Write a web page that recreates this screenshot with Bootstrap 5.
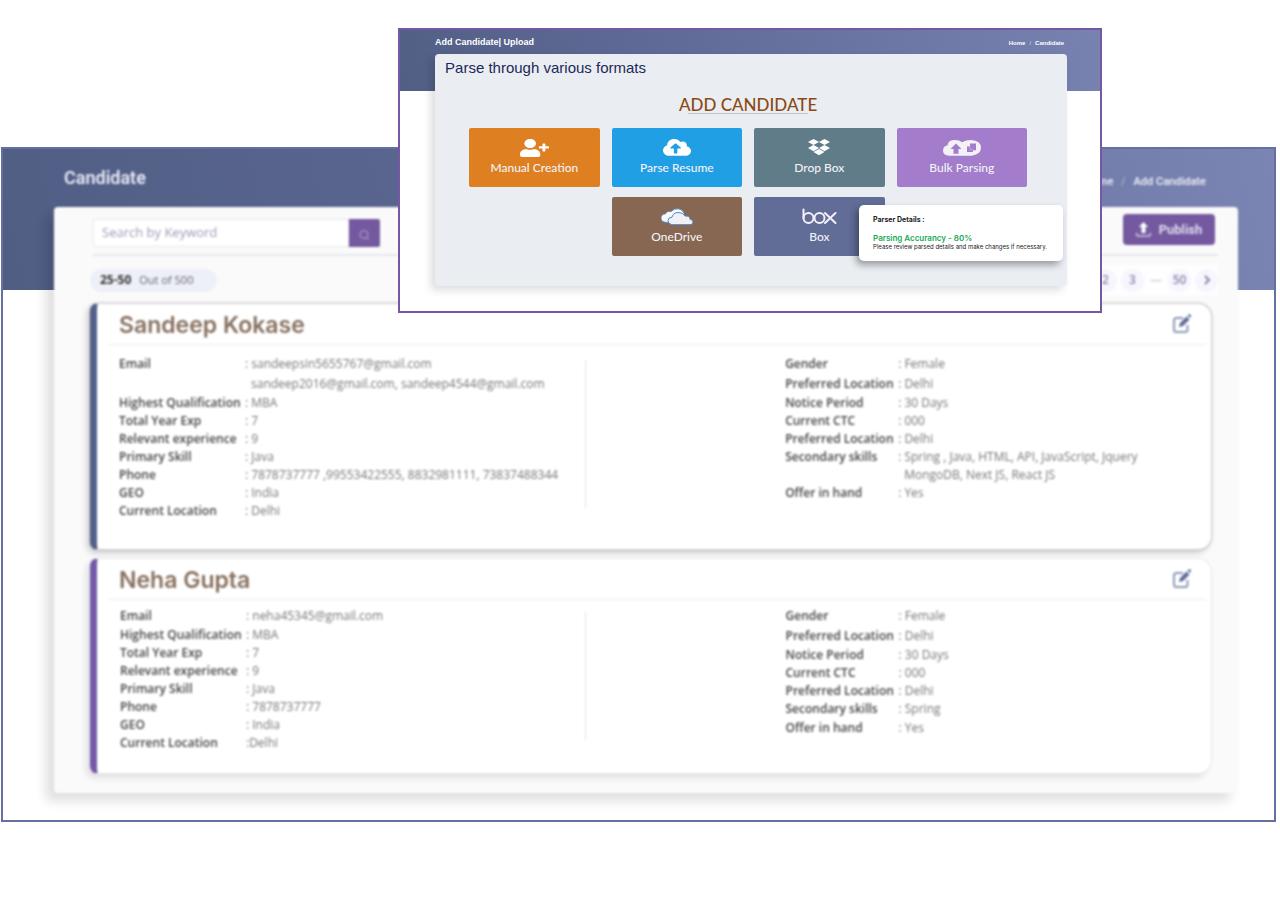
<!DOCTYPE html>
<html lang="en">
<head>
<meta charset="utf-8">
<meta name="viewport" content="width=device-width, initial-scale=1">
<title>Candidate</title>
<link href="https://cdn.jsdelivr.net/npm/bootstrap@5.3.0/dist/css/bootstrap.min.css" rel="stylesheet">
<style>
  body { font-family: "Open Sans", "Noto Sans", sans-serif; background: #fff; }
  .stage { padding: 147px 4px 77px 1px; }
  a { text-decoration: none; }

  /* candidate list, out of focus behind the dialog */
  .list-window {
    border: 2px solid #6470a0;
    background: #fff linear-gradient(75deg, #505e84 0%, #5b6691 38%, #6b76a5 70%, #7b85b3 100%) 0 0 / 100% 141px no-repeat;
  }
  .soft { filter: blur(1px); }
  .list-head { height: 58px; padding: 0 68px 0 61px; color: #fff; font-family: Roboto, sans-serif; }
  .list-head h1 { font-size: 18px; font-weight: 600; color: #e9ebf5; }
  .crumbs { font-size: 11px; font-weight: 600; padding-top: 8px; }
  .crumbs a { color: #e9ebf5; }
  .crumbs span { color: #a9b0d0; }
  .list-panel {
    margin: 0 36px 27px 51px; padding: 7px 26px 19px 36px;
    background: #fafafa; border-radius: 4px;
    box-shadow: -8px 8px 12px rgba(0,0,0,.13);
  }
  .toolbar { margin: 0 -6px 0 3px; padding: 0 3px 7px 0; border-bottom: 2px solid #e6e7ec; }
  .search { width: 287px; height: 28px; margin-top: 5px; }
  .search .form-control {
    font-family: "Open Sans", sans-serif; font-size: 13px; padding: 0 8px; border: 1px solid #e8e8ec; border-radius: 2px 0 0 2px; color: #444;
  }
  .search .form-control::placeholder { color: #9a9db5; }
  .search button { width: 32px; padding: 0; background: #7459a0; border: 0; border-radius: 0 2px 2px 0; }
  .btn-publish {
    width: 92px; height: 31px; padding: 0; background: #7459a0; color: #e9e4f2; border: 0; border-radius: 4px;
    font-family: Roboto, sans-serif; font-size: 13px; font-weight: 600;
  }
  .pager-row { height: 30px; margin: 9px -6px 8px 0; }
  .count { width: 127px; height: 23px; padding-left: 10px; border-radius: 12px; background: #eef0f9; font-size: 11px; color: #666; }
  .count strong { font-size: 12px; color: #333; }
  .pages { height: 30px; background: #fefefe; gap: 4px; color: #8f86a8; font-size: 12px; font-weight: 600; }
  .pages a, .pages span { width: 23px; height: 23px; color: inherit; display: flex; align-items: center; justify-content: center; }
  .pages a { border-radius: 50%; background: #f7f5fe; }
  .pages span { width: 16px; color: #c6cad0; }

  .person {
    background: #fff; border: 1px solid #d5d5d5; border-left: 7px solid #52608a; border-radius: 14px;
    border-top-left-radius: 8px; border-bottom-left-radius: 8px;
    box-shadow: -3px 3px 6px rgba(0,0,0,.18), 0 0 2px rgba(0,0,0,.25);
  }
  .person + .person { margin-top: 8px; border-color: #e8e8e8; border-left-color: #7459a8; box-shadow: -4px 4px 6px rgba(0,0,0,.1); }
  .person-head { height: 41px; margin: 0 5px 0 12px; padding: 0 14px 0 10px; border-bottom: 1px solid #ececec; }
  .person-head h2 { font-family: Inter, sans-serif; font-size: 23px; font-weight: 600; color: #87705f; padding-top: 3px; }
  .person-head button { width: 20px; height: 20px; padding: 0; border: 0; background: none; color: #616c98; }
  .person-body { padding: 9px 0 29px 22px; }
  .person + .person .person-body { padding: 6px 0 21px 23px; }
  .facts { margin: 0; font-size: 12px; line-height: 18px; color: #777; }
  .facts dt { width: 126px; color: #444; font-weight: 600; white-space: nowrap; }
  .facts dd { margin: 0; white-space: nowrap; }
  .facts .roomy, .facts .roomy dd { line-height: 20px; }
  .facts .more { padding-left: 6px; }
  .facts-left { width: calc(43% - 4px); }
  .facts-right { width: 39%; }
  .facts-right dt { width: 113px; }
  .rule { width: 1px; margin: 6px 0 12px; background: #e4e4e4; }

  /* upload dialog on top of the list */
  .upload {
    position: absolute; top: 28px; left: 31.1%; width: 55%; color: #fff;
    border: 2px solid #7657a3;
    background: #fff linear-gradient(80deg, #525f85 0%, #606b98 40%, #7782b0 100%) 0 0 / 100% 61px no-repeat;
  }
  .upload-head { height: 24px; padding: 0 36px 0 35px; font-family: "Liberation Sans", sans-serif; }
  .upload-head h2 { font-size: 9px; font-weight: 700; }
  .upload-head nav { font-size: 6px; font-weight: 700; padding-top: 2px; }
  .upload-head nav a { color: #fff; }
  .upload-panel { margin: 0 33px 25px 35px; padding: 4px 40px 30px 34px; background: #eaeef3; border-radius: 4px; box-shadow: -4px 4px 8px rgba(0,0,0,.14); }
  .upload-panel h3 { margin: 0 0 15px -24px; font-family: "Liberation Sans", sans-serif; font-size: 15px; line-height: 20px; color: #1d2858; }
  .upload-panel h4 { font-family: Lato, sans-serif; font-size: 17px; line-height: 24px; color: #8a4a16; font-weight: 500; }
  .underline { width: 120px; height: 1px; background: #c3c6d0; margin: -4px auto 14px; }
  .tiles { --bs-gutter-x: 12px; --bs-gutter-y: 10px; }
  .tile {
    display: block; width: 100%; height: 59px; padding: 0 0 2px; border: 0; border-radius: 2px; color: #f2f2f6;
    font-family: Lato, sans-serif; font-size: 12px; font-weight: 500; line-height: 16px;
  }
  .tile svg { display: block; margin: 2px auto 3px; height: 18px; }
  .t-manual { background: #de7f21; } .t-resume { background: #209fe5; } .t-drop { background: #607c89; }
  .t-bulk { background: #a37ccb; } .t-one { background: #876751; } .t-box { background: #616c97; }
  .parser-note {
    position: absolute; right: 37px; bottom: 50px; width: 204px; height: 56px; padding: 10px 14px;
    background: #fff; border-radius: 5px; box-shadow: -3px 4px 7px rgba(0,0,0,.35);
    font-family: Inter, sans-serif; color: #222;
  }
  .parser-note p { margin: 0; font-size: 6px; line-height: 7px; white-space: nowrap; }
  .parser-note .note-title { font-size: 7px; line-height: 10px; font-weight: 700; margin-bottom: 8px; }
  .parser-note .note-score { font-size: 8px; line-height: 10px; font-weight: 600; color: #17ab55; }
</style>
</head>
<body>
<svg class="d-none">
  <symbol id="edit" viewBox="0 0 20 20">
    <path d="M11 4H4.500Q2 4 2 6.500V15.500Q2 18 4.500 18H13Q15.500 18 15.500 15.500V11" fill="none" stroke="currentColor" stroke-width="2" opacity=".7"/>
    <path d="M7 13l1-4 6.500-6.500 3 3L11 12zM15.500 1.500l1-1q1-.7 2 .2t.3 2l-1.100 1z" fill="currentColor"/>
  </symbol>
</svg>
<div class="stage position-relative">
  <main class="list-window">
    <div class="soft">
      <header class="list-head d-flex justify-content-between align-items-center">
        <h1 class="m-0">Candidate</h1>
        <nav class="crumbs d-flex gap-2" aria-label="Breadcrumb"><a href="#">Home</a><span>/</span><a href="#">Add Candidate</a></nav>
      </header>
      <section class="list-panel">
        <div class="toolbar d-flex justify-content-between align-items-start">
          <form class="search input-group flex-nowrap">
            <input class="form-control" type="text" placeholder="Search by Keyword" aria-label="Search by Keyword">
            <button type="button" aria-label="Search"><svg width="12" height="12" viewBox="0 0 12 12" fill="none" stroke="#b7a6d0"><circle cx="6" cy="5.500" r="4"/><path d="M8 8l3 3"/></svg></button>
          </form>
          <button type="button" class="btn-publish d-flex align-items-center justify-content-center gap-2">
            <svg width="15" height="15" viewBox="0 0 15 15" fill="#fff"><path d="M7.500 0L12 5H9.500V11H5.500V5H3z"/><path d="M.5 10.500V12Q.5 14 2.500 14H12.500Q14.500 14 14.500 12V10.500" fill="none" stroke="#cfc3e0" stroke-width="1.500"/></svg>Publish
          </button>
        </div>
        <div class="pager-row d-flex justify-content-between align-items-center">
          <div class="count d-flex align-items-center gap-2"><strong>25-50</strong> Out of 500</div>
          <nav class="pages d-flex align-items-center" aria-label="Pages">
            <a href="#">1</a><a href="#">2</a><a href="#">3</a><span>—</span><a href="#">50</a>
            <a href="#" aria-label="Next"><svg width="8" height="10" viewBox="0 0 8 10" fill="none" stroke="currentColor" stroke-width="2"><path d="M2 1l4 4-4 4"/></svg></a>
          </nav>
        </div>

        <article class="person">
          <div class="person-head d-flex justify-content-between align-items-center">
            <h2 class="m-0">Sandeep Kokase</h2>
            <button type="button" aria-label="Edit Sandeep Kokase"><svg class="d-block" width="20" height="20"><use href="#edit"/></svg></button>
          </div>
          <div class="person-body d-flex">
            <dl class="facts facts-left">
              <div class="d-flex roomy"><dt>Email</dt><dd>: sandeepsin5655767@gmail.com<div class="more">sandeep2016@gmail.com, sandeep4544@gmail.com</div></dd></div>
              <div class="d-flex"><dt>Highest Qualification</dt><dd>: MBA</dd></div>
              <div class="d-flex"><dt>Total Year Exp</dt><dd>: 7</dd></div>
              <div class="d-flex"><dt>Relevant experience</dt><dd>: 9</dd></div>
              <div class="d-flex"><dt>Primary Skill</dt><dd>: Java</dd></div>
              <div class="d-flex"><dt>Phone</dt><dd>: 7878737777 ,99553422555, 8832981111, 73837488344</dd></div>
              <div class="d-flex"><dt>GEO</dt><dd>: India</dd></div>
              <div class="d-flex"><dt>Current Location</dt><dd>: Delhi</dd></div>
            </dl>
            <div class="rule"></div>
            <dl class="facts facts-right ms-auto">
              <div class="d-flex roomy"><dt>Gender</dt><dd>: Female</dd></div>
              <div class="d-flex roomy"><dt>Preferred Location</dt><dd>: Delhi</dd></div>
              <div class="d-flex"><dt>Notice Period</dt><dd>: 30 Days</dd></div>
              <div class="d-flex"><dt>Current CTC</dt><dd>: 000</dd></div>
              <div class="d-flex"><dt>Preferred Location</dt><dd>: Delhi</dd></div>
              <div class="d-flex"><dt>Secondary skills</dt><dd>: Spring , Java, HTML, API, JavaScript, Jquery<div class="more">MongoDB, Next JS, React JS</div></dd></div>
              <div class="d-flex"><dt>Offer in hand</dt><dd>: Yes</dd></div>
            </dl>
          </div>
        </article>

        <article class="person">
          <div class="person-head d-flex justify-content-between align-items-center">
            <h2 class="m-0">Neha Gupta</h2>
            <button type="button" aria-label="Edit Neha Gupta"><svg class="d-block" width="20" height="20"><use href="#edit"/></svg></button>
          </div>
          <div class="person-body d-flex">
            <dl class="facts facts-left">
              <div class="d-flex roomy"><dt>Email</dt><dd>: neha45345@gmail.com</dd></div>
              <div class="d-flex"><dt>Highest Qualification</dt><dd>: MBA</dd></div>
              <div class="d-flex"><dt>Total Year Exp</dt><dd>: 7</dd></div>
              <div class="d-flex"><dt>Relevant experience</dt><dd>: 9</dd></div>
              <div class="d-flex"><dt>Primary Skill</dt><dd>: Java</dd></div>
              <div class="d-flex"><dt>Phone</dt><dd>: 7878737777</dd></div>
              <div class="d-flex"><dt>GEO</dt><dd>: India</dd></div>
              <div class="d-flex"><dt>Current Location</dt><dd>:Delhi</dd></div>
            </dl>
            <div class="rule"></div>
            <dl class="facts facts-right ms-auto">
              <div class="d-flex roomy"><dt>Gender</dt><dd>: Female</dd></div>
              <div class="d-flex roomy"><dt>Preferred Location</dt><dd>: Delhi</dd></div>
              <div class="d-flex"><dt>Notice Period</dt><dd>: 30 Days</dd></div>
              <div class="d-flex"><dt>Current CTC</dt><dd>: 000</dd></div>
              <div class="d-flex"><dt>Preferred Location</dt><dd>: Delhi</dd></div>
              <div class="d-flex"><dt>Secondary skills</dt><dd>: Spring</dd></div>
              <div class="d-flex roomy"><dt>Offer in hand</dt><dd>: Yes</dd></div>
            </dl>
          </div>
        </article>
      </section>
    </div>
  </main>

  <section class="upload" role="dialog" aria-label="Add Candidate">
    <header class="upload-head d-flex justify-content-between align-items-center">
      <h2 class="m-0">Add Candidate| Upload</h2>
      <nav class="d-flex gap-1" aria-label="Breadcrumb"><a href="#">Home</a><span class="opacity-50">/</span><a href="#">Candidate</a></nav>
    </header>
    <div class="upload-panel">
      <h3>Parse through various formats</h3>
      <h4 class="text-center m-0">ADD CANDIDATE</h4>
      <div class="underline"></div>
      <div class="row tiles">
        <div class="col-3"><button type="button" class="tile t-manual">
          <svg width="29" viewBox="0 0 640 512" preserveAspectRatio="none" fill="#fff"><path d="M624 208h-64v-64c0-8.800-7.200-16-16-16h-32c-8.800 0-16 7.200-16 16v64h-64c-8.800 0-16 7.200-16 16v32c0 8.800 7.200 16 16 16h64v64c0 8.800 7.200 16 16 16h32c8.800 0 16-7.200 16-16v-64h64c8.800 0 16-7.200 16-16v-32c0-8.800-7.200-16-16-16zm-400 48c70.700 0 128-57.300 128-128S294.700 0 224 0 96 57.300 96 128s57.300 128 128 128zm89.600 32h-16.700c-22.200 10.200-46.900 16-72.900 16s-50.600-5.800-72.900-16h-16.700C60.200 288 0 348.200 0 422.400V464c0 26.500 21.500 48 48 48h352c26.500 0 48-21.500 48-48v-41.600c0-74.200-60.200-134.400-134.400-134.400z"/></svg>
          Manual Creation</button></div>
        <div class="col-3"><button type="button" class="tile t-resume">
          <svg width="28" viewBox="0 32 640 480" preserveAspectRatio="none" fill="#fff"><path d="M537.600 226.600c4.100-10.700 6.400-22.400 6.400-34.600 0-53-43-96-96-96-19.700 0-38.100 6-53.300 16.200C367 64.200 315.300 32 256 32c-88.400 0-160 71.600-160 160 0 2.700.1 5.400.2 8.100C40.200 219.800 0 273.200 0 336c0 79.500 64.500 144 144 144h368c70.700 0 128-57.300 128-128 0-61.900-44-113.600-102.400-125.400zM393.400 288H328v112c0 8.800-7.200 16-16 16h-48c-8.800 0-16-7.200-16-16V288h-65.400c-14.300 0-21.400-17.200-11.300-27.300l105.400-105.400c6.200-6.200 16.400-6.200 22.600 0l105.400 105.400c10.100 10.100 2.900 27.300-11.300 27.300z"/></svg>
          Parse Resume</button></div>
        <div class="col-3"><button type="button" class="tile t-drop">
          <svg width="22" viewBox="0 32 528 500" preserveAspectRatio="none" fill="#fff"><path d="M264.400 116.300l-132 84.300 132 84.300-132 84.300L0 284.100l132.300-84.300L0 116.300 132.300 32l132.100 84.300zM131.600 395.700l132-84.300 132 84.300-132 84.300-132-84.300zm132.800-111.600l132-84.300-132-83.600L395.700 32 528 116.300l-132.300 84.300L528 284.800l-132.300 84.300-131.300-85z"/></svg>
          Drop Box</button></div>
        <div class="col-3"><button type="button" class="tile t-bulk">
          <svg width="38" viewBox="0 0 38 20" preserveAspectRatio="none"><path d="M6 18.500q-6-.5-6-5.500Q0 8 4.500 7 5 1 12 1q4.500 0 7 2.500Q23 1 28 1q10 1 10 8.500T29 18.500z" fill="#f3f1f6"/><path d="M13 5l5.500 6H15.500v5.500h-5V11H7.500z" fill="#a37ccb"/><path d="M27 5h6v7.500H30V14.500h-6V8h3z" fill="#a37ccb"/><path d="M24.500 8.500H27V12h3" fill="none" stroke="#d9c9ec" stroke-width=".6"/></svg>
          Bulk Parsing</button></div>
        <div class="col-3 offset-3"><button type="button" class="tile t-one">
          <svg width="32" viewBox="0 0 32 20" preserveAspectRatio="none"><path d="M8 16q-8 .5-8-4.500 0-4.500 4.500-5Q6 3 10 4q3-4 8-3 4 1 5 5v10z" fill="#f7f9fb" stroke="#5e8fc0"/><path d="M11 18.500q-4-.5-4-4.500 0-3.500 4-3.800 1-5 6-5.200t7 4q5-.5 5 3.500 3 .5 3 3.300t-3 2.700z" fill="#eef2f6" stroke="#4f83ba"/></svg>
          OneDrive</button></div>
        <div class="col-3"><button type="button" class="tile t-box">
          <svg width="35" viewBox="0 0 35 18" fill="none" stroke="#f5effa" stroke-width="2" stroke-linecap="round"><path d="M1.500 1.500V10"/><circle cx="6.500" cy="10" r="5"/><circle cx="17.500" cy="10" r="5"/><path d="M23 5l10.500 10M33.500 5L23 15"/></svg>
          Box</button></div>
      </div>
    </div>
    <aside class="parser-note">
      <p class="note-title">Parser Details :</p>
      <p class="note-score">Parsing Accurancy - 80%</p>
      <p>Please review parsed details and make changes if necessary.</p>
    </aside>
  </section>
</div>
<script src="https://cdn.jsdelivr.net/npm/bootstrap@5.3.0/dist/js/bootstrap.bundle.min.js"></script>
</body>
</html>
